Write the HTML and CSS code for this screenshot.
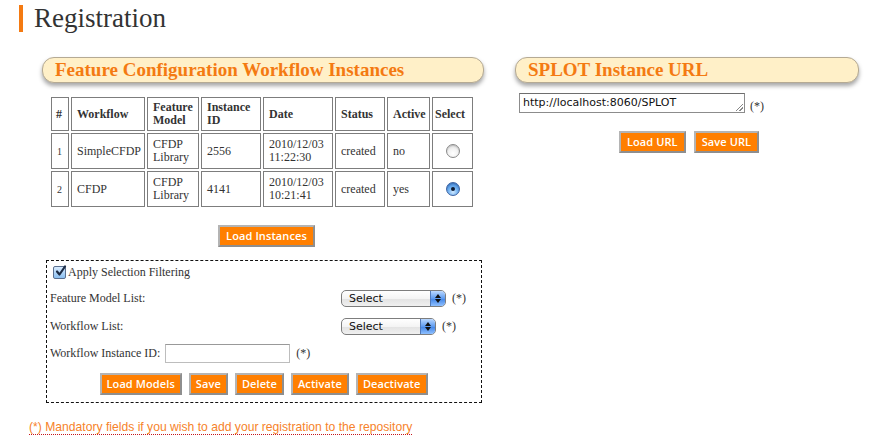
FILE: index.html
```html
<!DOCTYPE html>
<html>
<head>
<meta charset="utf-8">
<link rel="stylesheet" href="styles.css">
</head>
<body>
<h1 class="title">Registration</h1>
<div class="columns">
  <div class="col-left">
    <div class="pill"><span>Feature Configuration Workflow Instances</span></div>
    <table class="grid">
      <thead>
        <tr>
          <th class="c-num">#</th>
          <th class="c-wf">Workflow</th>
          <th class="c-fm">Feature Model</th>
          <th class="c-id">Instance ID</th>
          <th class="c-date">Date</th>
          <th class="c-status">Status</th>
          <th class="c-active">Active</th>
          <th class="c-select">Select</th>
        </tr>
      </thead>
      <tbody>
        <tr>
          <td class="num">1</td>
          <td>SimpleCFDP</td>
          <td>CFDP Library</td>
          <td>2556</td>
          <td>2010/12/03 11:22:30</td>
          <td>created</td>
          <td>no</td>
          <td class="center"><span class="radio"></span></td>
        </tr>
        <tr>
          <td class="num">2</td>
          <td>CFDP</td>
          <td>CFDP Library</td>
          <td>4141</td>
          <td>2010/12/03 10:21:41</td>
          <td>created</td>
          <td>yes</td>
          <td class="center"><span class="radio checked"></span></td>
        </tr>
      </tbody>
    </table>
    <div class="btn-row center-row"><button class="btn">Load Instances</button></div>
    <div class="filter">
      <div class="check-row">
        <span class="checkbox"><svg width="13" height="13" viewBox="0 0 13 13"><path d="M3 6.5 L5.5 9.5 L11 1.5" fill="none" stroke="#1d2c45" stroke-width="2.2" stroke-linecap="round" stroke-linejoin="round"/></svg></span>
        <span>Apply Selection Filtering</span>
      </div>
      <div class="field-row">
        <span class="label">Feature Model List:</span>
        <span class="select-wrap wide"><span class="sel-text">Select</span><span class="sel-arrow"></span></span>
        <span class="req">(*)</span>
      </div>
      <div class="field-row">
        <span class="label">Workflow List:</span>
        <span class="select-wrap"><span class="sel-text">Select</span><span class="sel-arrow"></span></span>
        <span class="req">(*)</span>
      </div>
      <div class="id-row">
        <span>Workflow Instance ID:</span>
        <span class="textbox"></span>
        <span class="req">(*)</span>
      </div>
      <div class="btn-row actions">
        <button class="btn">Load Models</button>
        <button class="btn">Save</button>
        <button class="btn">Delete</button>
        <button class="btn">Activate</button>
        <button class="btn">Deactivate</button>
      </div>
    </div>
    <p class="mandatory"><span>(*) Mandatory fields if you wish to add your registration to the repository</span></p>
  </div>
  <div class="col-right">
    <div class="pill"><span>SPLOT Instance URL</span></div>
    <div class="url-row">
      <span class="textarea">http://localhost:8060/SPLOT<span class="grip"></span></span>
      <span class="req url-req">(*)</span>
    </div>
    <div class="btn-row url-btns">
      <button class="btn">Load URL</button>
      <button class="btn">Save URL</button>
    </div>
  </div>
</div>
</body>
</html>
```
FILE: styles.css
```css
* { box-sizing: border-box; }
html, body { margin: 0; padding: 0; background: #fff; }
body {
  font-family: "Liberation Serif", "DejaVu Serif", serif;
  color: #333;
  width: 872px;
  height: 448px;
  overflow: hidden;
}
.title {
  margin: 5px 0 0 19px;
  padding: 0 0 0 11px;
  border-left: 4px solid #f47a12;
  font-weight: normal;
  font-size: 27px;
  line-height: 27px;
  height: 27px;
  color: #333;
}
.columns {
  display: flex;
  margin-top: 25px;
  padding-left: 42px;
  gap: 31px;
}
.col-left { width: 442px; }
.col-right { width: 344px; }
.pill {
  height: 26px;
  border: 1px solid #b5aa94;
  border-radius: 12px;
  background: #fff0c8;
  box-shadow: 0 3px 4px rgba(0, 0, 0, 0.35);
  padding-left: 12px;
  font-weight: bold;
  font-size: 19px;
  line-height: 24px;
  color: #f47a12;
  white-space: nowrap;
}
.grid {
  margin: 12px 0 0 7px;
  border-collapse: separate;
  border-spacing: 2px;
  table-layout: fixed;
  width: 426px;
  font-size: 12px;
  line-height: 13px;
}
.grid th, .grid td {
  border: 1px solid #7d7d7d;
  padding: 0 5px;
  text-align: left;
  vertical-align: middle;
  color: #333;
}
.grid th { height: 34px; font-weight: bold; }
.grid td { height: 36px; }
.grid .c-num { width: 18px; padding: 0 4px; }
.grid .c-wf { width: 74px; }
.grid .c-fm { width: 52px; padding-right: 0; }
.grid .c-id { width: 60px; padding-right: 0; }
.grid .c-date { width: 70px; padding-right: 0; }
.grid .c-status { width: 50px; padding-right: 0; }
.grid .c-active { width: 43px; padding-right: 0; }
.grid .c-select { width: 41px; padding: 0 2px; }
.grid td.num { font-size: 10px; padding: 0 5px; }
.grid td.center { text-align: center; }
.radio {
  display: inline-block;
  width: 14px;
  height: 14px;
  border-radius: 50%;
  border: 1px solid #8a8a8a;
  background: radial-gradient(circle at 50% 70%, #ffffff 0%, #f2f2f2 45%, #cfcfcf 100%);
  box-shadow: inset 0 1px 1px rgba(0,0,0,0.15);
  vertical-align: middle;
  position: relative;
}
.radio.checked {
  border-color: #3b62a3;
  background: radial-gradient(circle at 50% 75%, #cfe8ff 0%, #6fb0f0 45%, #2f6fc7 100%);
}
.radio.checked::after {
  content: "";
  position: absolute;
  left: 4px;
  top: 4px;
  width: 4px;
  height: 4px;
  border-radius: 50%;
  background: #0c1a33;
}
.btn-row { display: flex; }
.center-row { justify-content: center; margin-top: 16px; padding-left: 7px; }
.btn {
  font-family: "Open Sans", "DejaVu Sans", sans-serif;
  font-weight: 600;
  font-size: 11px;
  line-height: 16px;
  color: #fff;
  background: #ff7f00;
  border: 2px solid;
  border-color: #b4b4b4 #8e8e8e #8e8e8e #b4b4b4;
  padding: 1px 6px 1px;
  height: 22px;
  margin: 0;
  cursor: pointer;
  letter-spacing: 0.1px;
}
.filter {
  margin: 13px 2px 0 4px;
  border: 1px dashed #111;
  height: 143px;
  padding: 3px 0 0 3px;
  font-size: 12px;
  color: #333;
}
.check-row { display: flex; align-items: center; height: 17px; gap: 2px; padding-left: 3px; }
.checkbox {
  display: inline-block;
  width: 13px;
  height: 13px;
  border: 1px solid #5a6f8f;
  border-radius: 2px;
  background: linear-gradient(#d9ecff, #8bbff0);
  position: relative;
}
.checkbox svg { position: absolute; left: 0; top: -2px; overflow: visible; }
.field-row {
  display: flex;
  align-items: center;
  height: 18px;
  margin-top: 8px;
}
.field-row + .field-row { margin-top: 10px; }
.field-row .label { width: 291px; }
.select-wrap {
  display: inline-flex;
  align-items: center;
  position: relative;
  width: 95px;
  height: 17px;
  border: 1px solid #7d7d7d;
  border-radius: 5px;
  background: linear-gradient(#ffffff, #f4f4f4 50%, #e2e2e2 51%, #f0f0f0);
  font-family: "DejaVu Sans", sans-serif;
  font-size: 11px;
  color: #111;
  overflow: hidden;
}
.select-wrap.wide { width: 105px; }
.sel-text { padding-left: 7px; flex: 1; }
.sel-arrow {
  width: 15px;
  height: 100%;
  border-left: 1px solid #5179b8;
  background: linear-gradient(#bcd9ff, #5d9bf0 50%, #3f83e6 51%, #8fc0ff);
  position: relative;
}
.sel-arrow::before, .sel-arrow::after {
  content: "";
  position: absolute;
  left: 4px;
  border-left: 3px solid transparent;
  border-right: 3px solid transparent;
}
.sel-arrow::before { top: 3px; border-bottom: 4px solid #111; }
.sel-arrow::after { bottom: 3px; border-top: 4px solid #111; }
.req { font-size: 12px; margin-left: 6px; color: #333; }
.id-row {
  display: flex;
  align-items: center;
  margin-top: 9px;
  height: 19px;
}
.textbox {
  display: inline-block;
  width: 125px;
  height: 19px;
  margin-left: 5px;
  border: 1px solid #bdbdbd;
  border-top-color: #999;
  background: #fff;
}
.actions { justify-content: center; gap: 7px; margin-top: 10px; padding-right: 4px; }
.actions .btn { padding: 1px 5px; }
.mandatory {
  margin: 17px 0 0 -13px;
  font-family: "Liberation Sans", Arial, sans-serif;
  font-size: 12.15px;
  color: #f6822a;
}
.mandatory span {
  border-bottom: 1px dotted #c4161c;
  padding-bottom: 0;
}
.url-row {
  display: flex;
  align-items: flex-end;
  margin-top: 10px;
  padding-left: 4px;
}
.textarea {
  display: inline-block;
  width: 226px;
  height: 20px;
  border: 1px solid #8c8c8c;
  border-top-color: #6e6e6e;
  background: #fff;
  font-family: "DejaVu Sans", sans-serif;
  font-size: 11px;
  line-height: 17px;
  padding-left: 3px;
  color: #111;
  position: relative;
}
.grip {
  position: absolute;
  right: 1px;
  bottom: 1px;
  width: 7px;
  height: 7px;
  background: linear-gradient(135deg, transparent 45%, #888 45%, #888 55%, transparent 55%, transparent 70%, #888 70%, #888 80%, transparent 80%);
}
.url-req { margin-left: 5px; line-height: 14px; }
.url-btns { justify-content: center; gap: 8px; margin-top: 18px; padding-left: 4px; }
```
